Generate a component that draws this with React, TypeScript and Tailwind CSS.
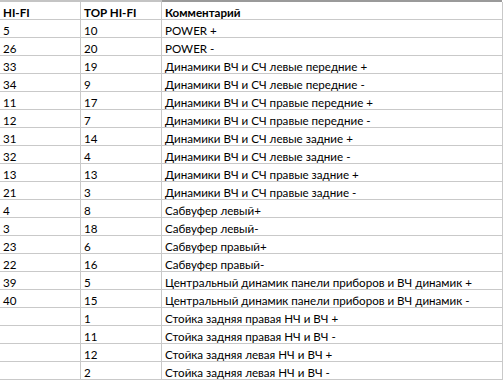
const rows: [string, string, string][] = [
  ['5', '10', 'POWER +'],
  ['26', '20', 'POWER -'],
  ['33', '19', 'Динамики ВЧ и СЧ левые передние +'],
  ['34', '9', 'Динамики ВЧ и СЧ левые передние -'],
  ['11', '17', 'Динамики ВЧ и СЧ правые передние +'],
  ['12', '7', 'Динамики ВЧ и СЧ правые передние -'],
  ['31', '14', 'Динамики ВЧ и СЧ левые задние +'],
  ['32', '4', 'Динамики ВЧ и СЧ левые задние -'],
  ['13', '13', 'Динамики ВЧ и СЧ правые задние +'],
  ['21', '3', 'Динамики ВЧ и СЧ правые задние -'],
  ['4', '8', 'Сабвуфер левый+'],
  ['3', '18', 'Сабвуфер левый-'],
  ['23', '6', 'Сабвуфер правый+'],
  ['22', '16', 'Сабвуфер правый-'],
  ['39', '5', 'Центральный динамик панели приборов и ВЧ динамик +'],
  ['40', '15', 'Центральный динамик панели приборов и ВЧ динамик -'],
  ['', '1', 'Стойка задняя правая НЧ и ВЧ +'],
  ['', '11', 'Стойка задняя правая НЧ и ВЧ -'],
  ['', '12', 'Стойка задняя левая НЧ и ВЧ +'],
  ['', '2', 'Стойка задняя левая НЧ и ВЧ -'],
];

const Row = ({ cells, bold }: { cells: [string, string, string]; bold?: boolean }) => (
  <div className={`grid grid-cols-[81px_81px_1fr] h-[18px] border-b border-[#c9c9c9] ${bold ? 'font-bold' : ''}`}>
    <div className="border-r border-[#c9c9c9] pl-[3px] pt-[3px] leading-[15px]">{cells[0]}</div>
    <div className="border-r border-[#c9c9c9] pl-[3px] pt-[3px] leading-[15px]">{cells[1]}</div>
    <div className="pl-[3px] pt-[3px] leading-[15px] whitespace-nowrap">{cells[2]}</div>
  </div>
);

export default function App() {
  return (
    <div className="w-[504px] h-[382px] bg-white overflow-hidden text-[11.6px] text-black" style={{ fontFamily: 'Lato, "Liberation Sans", sans-serif' }}>
      <div className="flex h-[2px]">
        <div className="w-[162px] bg-[#c4c4c4]" />
        <div className="w-[340px] bg-[#9a9a9a]" />
      </div>
      <div className="w-[503px] border-r border-[#c9c9c9]">
        <Row cells={['HI-FI', 'TOP HI-FI', 'Комментарий']} bold />
        {rows.map((r, i) => (
          <Row key={i} cells={r} />
        ))}
      </div>
    </div>
  );
}
